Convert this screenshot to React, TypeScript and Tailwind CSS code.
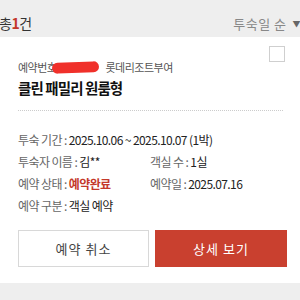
export default function App() {
  const font = { fontFamily: '"Noto Sans CJK KR", "Noto Sans", sans-serif' };
  return (
    <div className="w-[300px] h-[300px] bg-[#eeeeee] overflow-hidden" style={font}>
      {/* Header */}
      <div className="h-[37px] flex items-center justify-between pl-0 pr-0 pt-[10px]">
        <span className="text-[14px] text-[#333] tracking-[-0.5px] -ml-[1px]">
          총<span className="text-[#c4392b] font-bold">1</span>건
        </span>
        <span className="text-[13px] text-[#888] flex items-center gap-[6px] tracking-[0.5px]">
          투숙일 순
          <span className="text-[8px] text-[#666] mr-[-1px]">▼</span>
        </span>
      </div>

      {/* Card */}
      <div className="bg-white h-[246px] px-[18px] pt-[9px]">
        <div className="flex justify-end">
          <div className="w-[16px] h-[16px] border border-[#cfcfcf] bg-white mr-[-3px]" />
        </div>
        <div className="flex items-center text-[11px] text-[#555] -mt-[2px] h-[14px] tracking-[-0.5px]">
          <span>예약번호</span>
          <span className="w-[47px] h-[11px] bg-[#f0302a] rounded-full -ml-[4px] mr-[6px] -rotate-2" />
          <span>롯데리조트부여</span>
        </div>
        <div className="text-[14.5px] font-bold text-[#111] mt-[4px] leading-[20px] tracking-[-0.9px]">클린 패밀리 원룸형</div>
        <div className="border-t border-dotted border-[#cccccc] mt-[12px] w-[265px]" />

        <div className="mt-[18px] text-[12px] text-[#222] tracking-[-0.6px] leading-[22px]">
          <div>
            <span className="text-[#666]">투숙 기간 : </span>2025.10.06 ~ 2025.10.07 (1박)
          </div>
          <div className="grid grid-cols-[132px_1fr]">
            <div><span className="text-[#666]">투숙자 이름 : </span>김**</div>
            <div><span className="text-[#666]">객실 수 : </span>1실</div>
          </div>
          <div className="grid grid-cols-[132px_1fr]">
            <div><span className="text-[#666]">예약 상태 : </span><span className="text-[#c4392b] font-bold">예약완료</span></div>
            <div><span className="text-[#666]">예약일 : </span>2025.07.16</div>
          </div>
          <div>
            <span className="text-[#666]">예약 구분 : </span>객실 예약
          </div>
        </div>

        <div className="flex gap-[6px] mt-[13px] w-[269px]">
          <button className="w-[131px] h-[37px] border border-[#d8d8d8] bg-white text-[13px] text-[#444] tracking-[1px]">예약 취소</button>
          <button className="flex-1 h-[37px] bg-[#c9402f] text-white text-[13px] tracking-[1px]">상세 보기</button>
        </div>
      </div>
    </div>
  );
}
